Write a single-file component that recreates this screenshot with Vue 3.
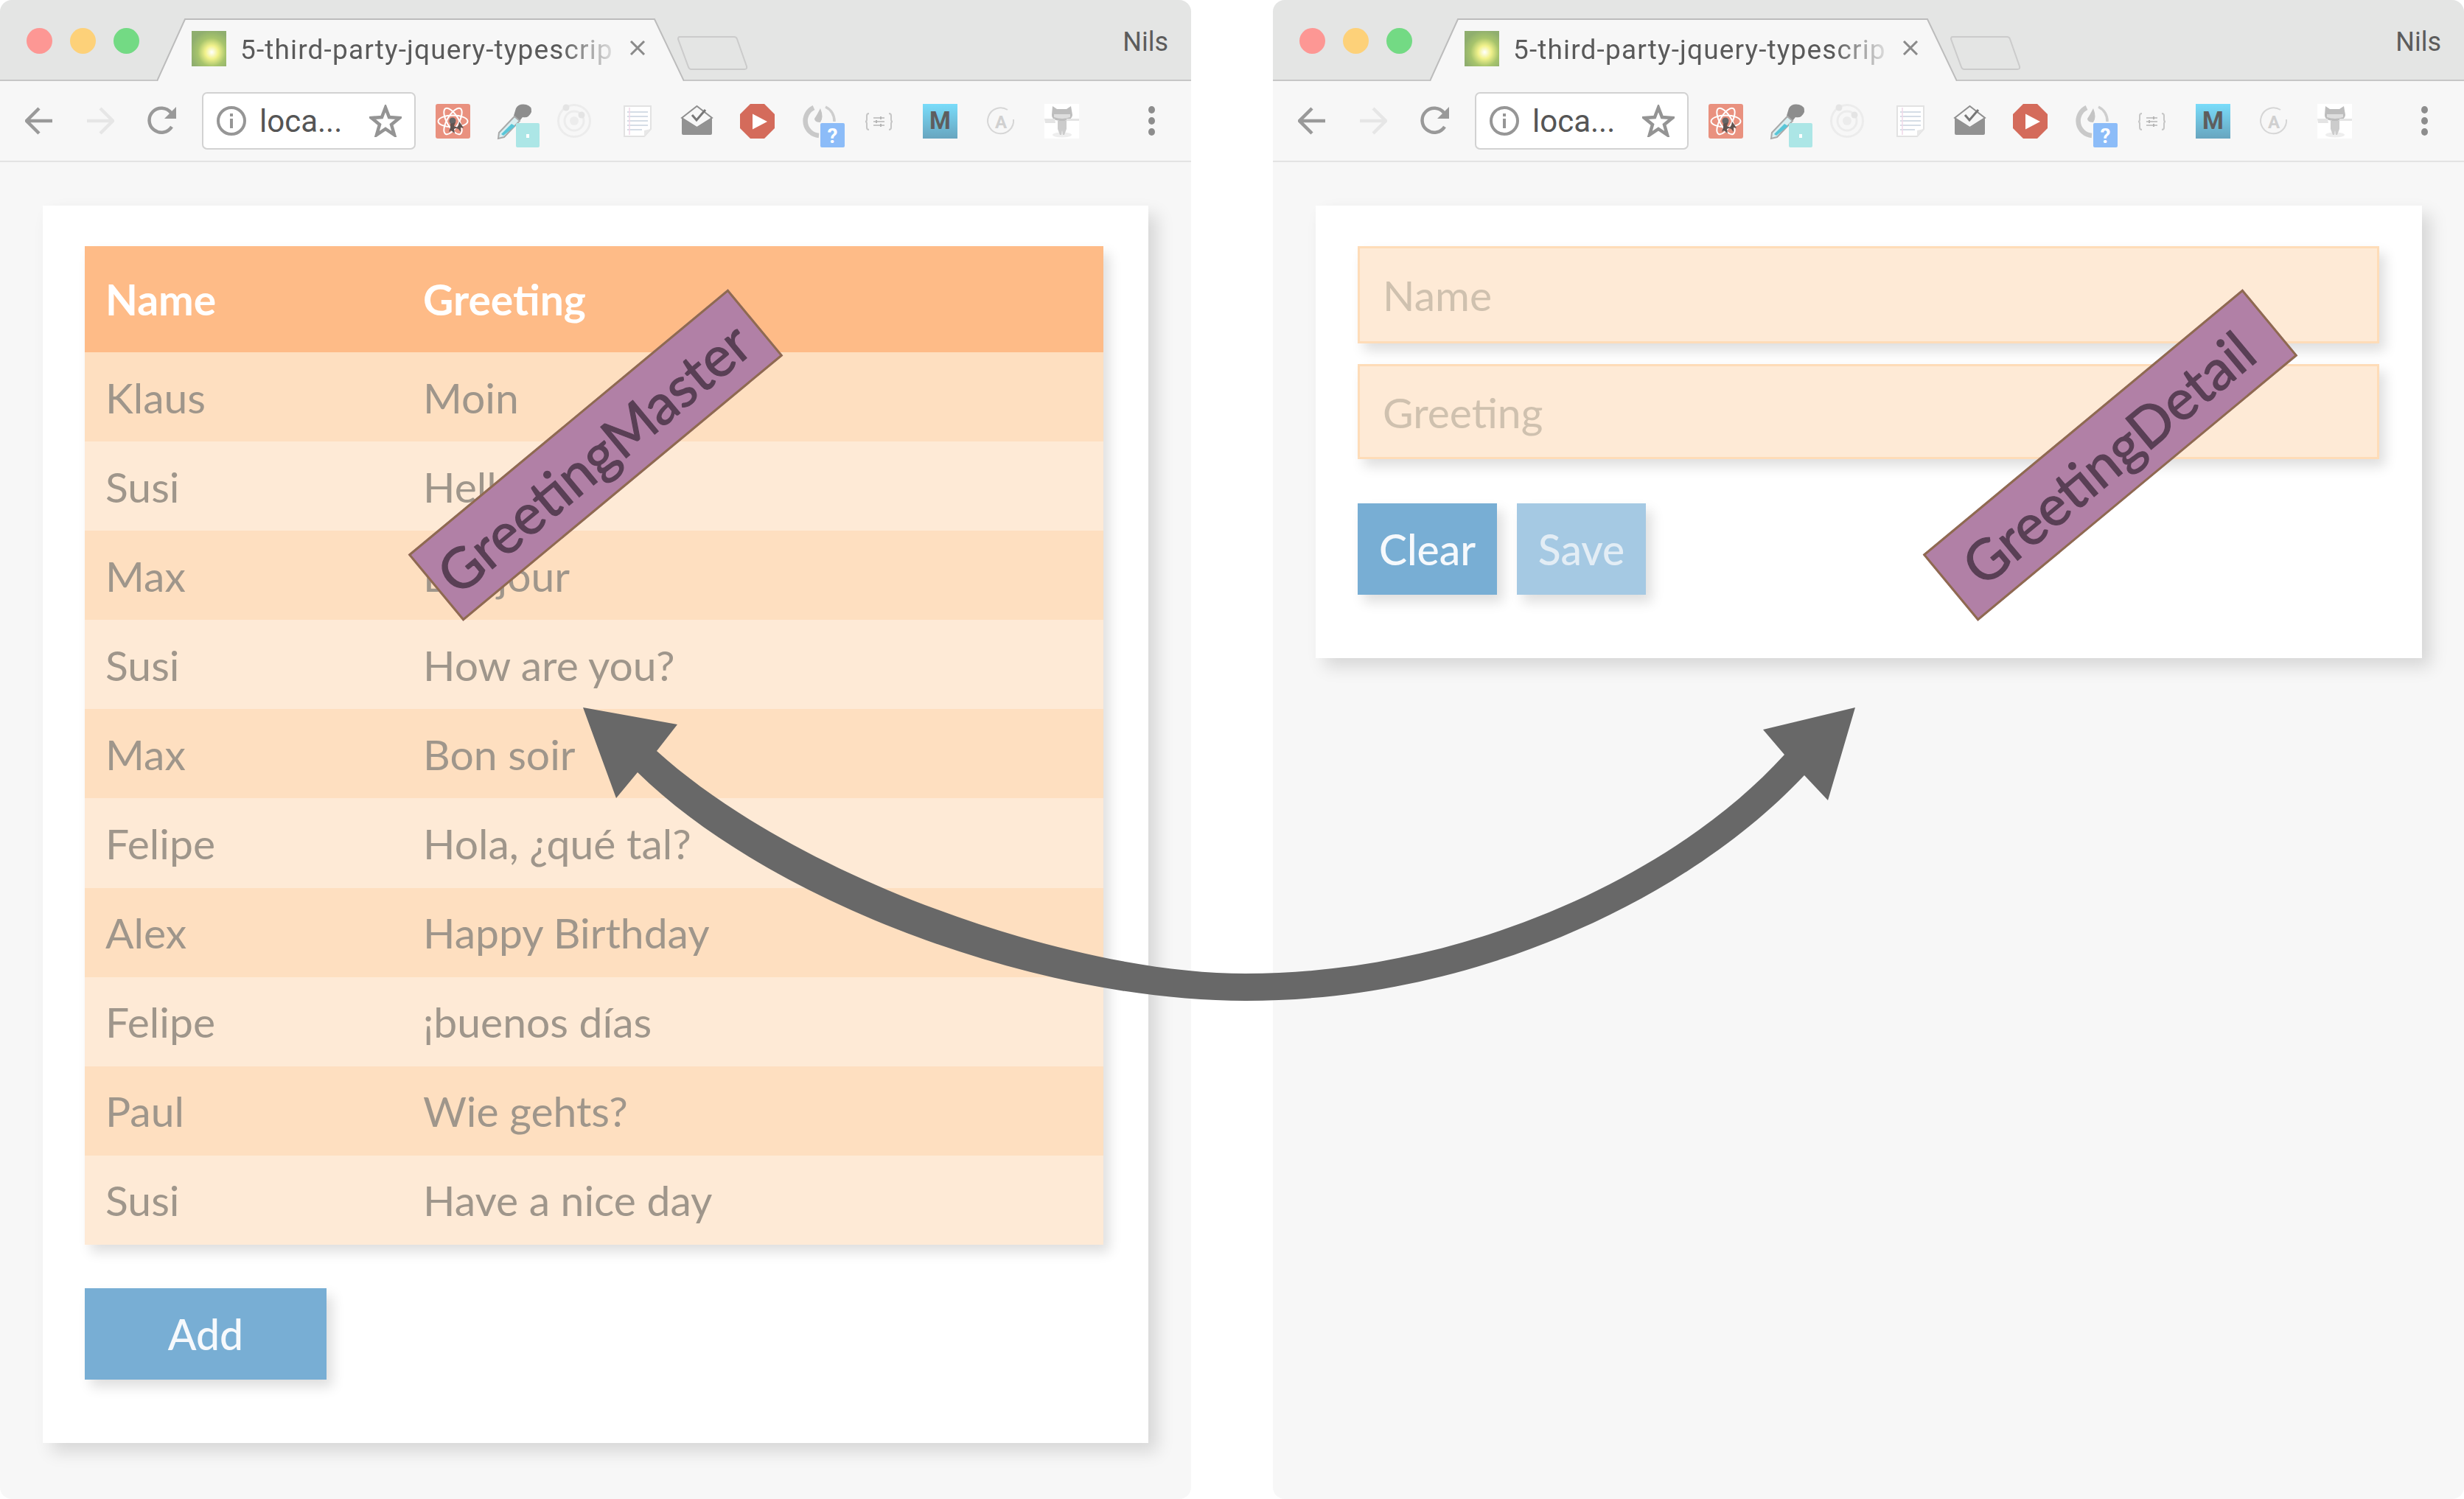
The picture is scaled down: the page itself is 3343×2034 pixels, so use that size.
<script setup>
const windows = ['master', 'detail'];

const greetings = [
  { name: 'Klaus', text: 'Moin' },
  { name: 'Susi', text: 'Hello!' },
  { name: 'Max', text: 'Bonjour' },
  { name: 'Susi', text: 'How are you?' },
  { name: 'Max', text: 'Bon soir' },
  { name: 'Felipe', text: 'Hola, ¿qué tal?' },
  { name: 'Alex', text: 'Happy Birthday' },
  { name: 'Felipe', text: '¡buenos días' },
  { name: 'Paul', text: 'Wie gehts?' },
  { name: 'Susi', text: 'Have a nice day' }
];
</script>

<template>
  <div class="stage">
    <section v-for="win in windows" :key="win" class="window">
      <header class="tab-strip">
        <div class="lights">
          <span class="light red"></span>
          <span class="light yellow"></span>
          <span class="light green"></span>
        </div>
        <div class="tab">
          <svg class="tab-shape" viewBox="0 0 715 85" preserveAspectRatio="none">
            <path d="M0 85 L38 1 H675 L715 85" fill="#f7f7f7" stroke="#bcbcbc" stroke-width="2" />
          </svg>
          <svg class="favicon" viewBox="0 0 47 48">
            <defs>
              <radialGradient :id="`fav-${win}`" cx="0.58" cy="0.6" r="0.62">
                <stop offset="0" stop-color="#ffffff" />
                <stop offset="0.3" stop-color="#f2f28c" />
                <stop offset="0.65" stop-color="#a7c46c" />
                <stop offset="1" stop-color="#8fae6e" />
              </radialGradient>
            </defs>
            <rect width="47" height="48" :fill="`url(#fav-${win})`" />
          </svg>
          <span class="tab-title">5-third-party-jquery-typescrip</span>
          <svg class="tab-close" viewBox="0 0 22 20">
            <path d="M2 1 L20 19 M20 1 L2 19" stroke="#8a8a8a" stroke-width="3" fill="none" />
          </svg>
        </div>
        <svg class="new-tab" viewBox="0 0 96 47">
          <path d="M3 1 H77 Q80 1 81 4 L94 41 Q95 45 91 45 H19 Q16 45 15 42 L1 4 Q1 1 3 1 Z" fill="#e4e5e4" stroke="#cbcbcb" stroke-width="2" />
        </svg>
        <span class="user">Nils</span>
      </header>

      <nav class="toolbar">
        <svg class="nav-icon" viewBox="0 0 38 38">
          <path d="M37 19 H4 M19 2 L2 19 L19 36" fill="none" stroke="#999" stroke-width="4.5" />
        </svg>
        <svg class="nav-icon" viewBox="0 0 38 38">
          <path d="M1 19 H34 M19 2 L36 19 L19 36" fill="none" stroke="#e6e6e6" stroke-width="4.5" />
        </svg>
        <svg class="nav-icon reload" viewBox="0 0 40 40">
          <path d="M33 28 A16.5 16.5 0 1 1 32 9" fill="none" stroke="#999" stroke-width="4.5" />
          <path d="M39 1 V17 H23 Z" fill="#999" />
        </svg>

        <div class="address">
          <svg class="info" viewBox="0 0 40 40">
            <circle cx="20" cy="20" r="18" fill="none" stroke="#969696" stroke-width="4" />
            <path d="M20 17 V30 M20 10 V14" stroke="#969696" stroke-width="4" />
          </svg>
          <span class="url">loca...</span>
          <svg class="star" viewBox="0 0 44 44">
            <path d="M22 4 L27 17 L41 18 L30 27 L34 41 L22 33 L10 41 L14 27 L3 18 L17 17 Z" fill="none" stroke="#949494" stroke-width="4.5" />
          </svg>
        </div>

        <div class="extensions">
          <svg class="ext" viewBox="0 0 47 47">
            <rect width="47" height="47" rx="3" fill="#e9917f" />
            <g fill="none" stroke="#fff" stroke-width="2">
              <ellipse cx="23.5" cy="23.5" rx="20" ry="8" />
              <ellipse cx="23.5" cy="23.5" rx="20" ry="8" transform="rotate(60 23.5 23.5)" />
              <ellipse cx="23.5" cy="23.5" rx="20" ry="8" transform="rotate(120 23.5 23.5)" />
            </g>
            <circle cx="23" cy="23" r="4.5" fill="#666" />
            <path d="M20 27 L27 25 L25 30 L30 32 L25 34 L26 40 L21 36 L18 38 L20 32 Z M32 24 L35 28 L38 33 L34 32 L34 38 L31 34 L28 33 L31 29 Z" fill="#5f5350" />
          </svg>

          <svg class="ext" viewBox="0 0 47 47">
            <path d="M26 6 Q30 -1 40 1 Q48 3 47 11 Q43 20 35 18 L31 23 L23 16 Z" fill="#8d8d8d" />
            <path d="M24 17 L31 23 L10 45 L2 47 L3 39 Z" fill="#d9eef0" stroke="#a9a9a9" stroke-width="2" />
            <path d="M20 27 L25 30 L9 43 L6 41 Z" fill="#58c6d8" />
            <rect x="26" y="26" width="32" height="33" rx="2" fill="#ace6e6" />
            <rect x="40" y="41" width="4" height="5" fill="#fff" />
          </svg>

          <svg class="ext" viewBox="0 0 47 47">
            <g fill="none" stroke="#ececec">
              <circle cx="23" cy="23" r="21.5" stroke-width="3" />
              <circle cx="23" cy="23" r="13" stroke-width="3" />
            </g>
            <circle cx="23" cy="23" r="6" fill="#ececec" />
            <circle cx="12" cy="5" r="4.5" fill="#e4e4e4" />
            <circle cx="33" cy="15" r="4.5" fill="#e4e4e4" />
          </svg>

          <svg class="ext" viewBox="0 0 47 47">
            <path d="M8 3 H44 V34 L35 44 H8 Z" fill="#fff" stroke="#e2e2e2" stroke-width="2" />
            <path d="M12 11 H40 M12 17 H40 M12 23 H40 M12 29 H40 M12 35 H32" stroke="#d5dde6" stroke-width="2" />
            <path d="M15 5 V42" stroke="#f0d8e8" stroke-width="1.5" />
            <path d="M44 34 L35 36 L35 44 Z" fill="#e8e8e8" />
          </svg>

          <svg class="ext" viewBox="0 0 47 47">
            <path d="M4 19 L24.5 3 L45 19 L24.5 32 Z" fill="#f7f7f7" stroke="#8f8f8f" stroke-width="2" />
            <path d="M4 19 L24.5 33 L45 19 V40 Q45 42 43 42 H6 Q4 42 4 40 Z" fill="#929292" />
            <path d="M18 15 L24 22 L36 8" fill="none" stroke="#777" stroke-width="3" />
          </svg>

          <svg class="ext" viewBox="0 0 47 47">
            <path d="M14 0 H33 L47 14 V33 L33 47 H14 L0 33 V14 Z" fill="#d46b5b" />
            <path d="M17 13.5 L37 24 L17 34.5 Z" fill="#fff" />
          </svg>

          <svg class="ext" viewBox="0 0 47 47">
            <path d="M17 5 A20 20 0 0 0 24 43" fill="none" stroke="#c9c9c9" stroke-width="6.5" />
            <path d="M33 4 A21 21 0 0 1 45 24" fill="none" stroke="#cecece" stroke-width="3.5" />
            <path d="M26 6 Q31 18 26 25 Q18 25 18 20 Q22 14 26 6 Z" fill="#c4c4c4" />
            <rect x="26" y="26" width="33" height="33" rx="2" fill="#8cbcf8" />
            <text x="42.5" y="53" class="badge-mark">?</text>
          </svg>

          <svg class="ext" viewBox="0 0 47 47">
            <g fill="none" stroke="#c6c6c6" stroke-width="2">
              <path d="M10 13 Q7 13 7 16 V21 Q7 24 5 24 Q7 24 7 27 V32 Q7 35 10 35" />
              <path d="M37 13 Q40 13 40 16 V21 Q40 24 42 24 Q40 24 40 27 V32 Q40 35 37 35" />
              <path d="M16 19 H31 M16 24 H31 M16 29 H31" stroke-width="2" />
            </g>
            <path d="M26 17 V21 M20 22 V26 M26 27 V31" stroke="#b5b5b5" stroke-width="2" />
          </svg>

          <svg class="ext" viewBox="0 0 47 47">
            <defs>
              <linearGradient :id="`m-${win}`" x1="0" y1="0" x2="0" y2="1">
                <stop offset="0" stop-color="#79dcfa" />
                <stop offset="1" stop-color="#68a5bf" />
              </linearGradient>
            </defs>
            <rect width="47" height="47" :fill="`url(#m-${win})`" />
            <text x="23.5" y="34" class="ext-m">M</text>
          </svg>

          <svg class="ext" viewBox="0 0 47 47">
            <path d="M33 8 A17.5 17.5 0 1 0 41 21" fill="none" stroke="#d6d6d6" stroke-width="2" />
            <text x="24" y="33" class="ext-a">A</text>
          </svg>

          <svg class="ext" viewBox="0 0 47 47">
            <rect width="47" height="47" fill="#fff" />
            <ellipse cx="24" cy="42" rx="13" ry="3.5" fill="#eeeeee" />
            <path d="M11 3 L17 7 H30 L36 3 L38 15 Q37 23 24 23 Q10 23 10 15 Z" fill="#bdbdbd" />
            <path d="M13 14 H35 V18 Q24 22 13 18 Z" fill="#dedede" />
            <path d="M18 23 H30 L30 34 L27 42 H25 L24 36 L23 42 H21 L18 34 Z" fill="#cccccc" />
            <path d="M0 20 H14 L15 26 H1 Z M30 20 H47 V23 H30 Z" fill="#e4e4e4" />
          </svg>
        </div>

        <div class="menu-dots">
          <span></span>
          <span></span>
          <span></span>
        </div>
      </nav>

      <main class="page">
        <div v-if="win === 'master'" class="card">
          <div class="table">
            <div class="row head">
              <div>Name</div>
              <div>Greeting</div>
            </div>
            <div v-for="(item, index) in greetings" :key="index" class="row" :class="index % 2 ? 'even' : 'odd'">
              <div>{{ item.name }}</div>
              <div>{{ item.text }}</div>
            </div>
          </div>
          <button class="btn add" type="button">Add</button>
        </div>

        <div v-else class="card detail">
          <input class="field name" type="text" placeholder="Name" />
          <input class="field greeting" type="text" placeholder="Greeting" />
          <div class="actions">
            <button class="btn clear" type="button">Clear</button>
            <button class="btn save" type="button">Save</button>
          </div>
        </div>
      </main>
    </section>

    <div class="label label-master">GreetingMaster</div>
    <div class="label label-detail">GreetingDetail</div>

    <svg class="arrow" viewBox="0 0 3343 2034">
      <path
        fill="#686868"
        d="M791 960 L919 983 L891 1019 C1080 1190 1450 1321 1690 1321 C1985 1321 2270 1190 2421 1024 L2392 990 L2517 960 L2480 1086 L2448 1052 C2290 1220 2000 1358 1690 1358 C1400 1358 1040 1220 865 1048 L836 1083 Z"
      />
    </svg>
  </div>
</template>

<style>
html,
body {
  margin: 0;
  background: #ffffff;
}
</style>

<style scoped>
.stage {
  position: relative;
  display: flex;
  justify-content: space-between;
  width: 3343px;
  height: 2034px;
  overflow: hidden;
  background: #ffffff;
  font-family: Lato, "Open Sans", sans-serif;
}

.window {
  display: flex;
  flex-direction: column;
  width: 1616px;
  height: 2034px;
  border-radius: 16px;
  overflow: hidden;
  background: #f7f7f7;
}

.tab-strip {
  display: flex;
  align-items: flex-end;
  flex: none;
  height: 110px;
  box-sizing: border-box;
  border-bottom: 2px solid #c6c6c6;
  background: #e4e5e4;
  font-family: Roboto, sans-serif;
}

.lights {
  display: flex;
  gap: 24px;
  align-self: flex-start;
  margin: 38px 0 0 36px;
}

.light {
  width: 35px;
  height: 35px;
  border-radius: 50%;
}

.red { background: #fd9794; }
.yellow { background: #fdd179; }
.green { background: #73da84; }

.tab {
  position: relative;
  display: flex;
  align-items: center;
  width: 715px;
  height: 85px;
  margin: 0 0 -2px 24px;
  box-sizing: border-box;
  padding: 0 0 14px 47px;
}

.tab-shape {
  position: absolute;
  inset: 0;
  width: 100%;
  height: 100%;
}

.favicon {
  position: relative;
  flex: none;
  width: 47px;
  height: 48px;
  margin-top: 10px;
}

.tab-title {
  position: relative;
  flex: none;
  width: 506px;
  margin: 14px 0 0 19px;
  font-size: 37px;
  letter-spacing: 1.15px;
  white-space: nowrap;
  overflow: hidden;
  color: #5a5a5a;
  -webkit-mask-image: linear-gradient(to right, #000 86%, rgba(0, 0, 0, 0.15) 100%);
  mask-image: linear-gradient(to right, #000 86%, rgba(0, 0, 0, 0.15) 100%);
}

.tab-close {
  position: relative;
  flex: none;
  width: 22px;
  height: 20px;
  margin: 8px 0 0 22px;
}

.new-tab {
  flex: none;
  align-self: flex-start;
  width: 96px;
  height: 47px;
  margin: 49px 0 0 -9px;
}

.user {
  align-self: flex-start;
  margin: 36px 31px 0 auto;
  font-size: 36px;
  color: #5c5c5c;
}

.toolbar {
  display: flex;
  align-items: center;
  flex: none;
  height: 110px;
  box-sizing: border-box;
  padding-left: 34px;
  border-bottom: 2px solid #e3e3e3;
  background: #f7f7f7;
  font-family: Roboto, sans-serif;
}

.nav-icon {
  width: 38px;
  height: 38px;
  margin-right: 45px;
}

.reload {
  width: 40px;
  height: 40px;
  margin-right: 34px;
}

.address {
  display: flex;
  align-items: center;
  width: 290px;
  height: 78px;
  box-sizing: border-box;
  padding: 0 17px 0 18px;
  border: 2px solid #d2d2d2;
  border-radius: 7px;
  background: #ffffff;
}

.info {
  width: 40px;
  height: 40px;
  margin-right: 18px;
}

.url {
  font-size: 42px;
  color: #555555;
}

.star {
  width: 44px;
  height: 44px;
  margin-left: auto;
}

.extensions {
  display: flex;
  gap: 35.6px;
  margin-left: 27px;
}

.ext {
  width: 47px;
  height: 47px;
  overflow: visible;
}

.badge-mark {
  font: 700 28px Roboto, sans-serif;
  fill: #ffffff;
  text-anchor: middle;
}

.ext-m {
  font: 700 33px Roboto, sans-serif;
  fill: #5e5e5e;
  text-anchor: middle;
}

.ext-a {
  font: 700 24px Roboto, sans-serif;
  fill: #d0d0d0;
  text-anchor: middle;
}

.menu-dots {
  display: flex;
  flex-direction: column;
  gap: 5px;
  margin-left: 94px;
}

.menu-dots span {
  width: 9px;
  height: 10px;
  border-radius: 50%;
  background: #8d8d8d;
}

.page {
  flex: 1;
  padding: 59px 0 0 58px;
}

.card {
  display: flex;
  flex-direction: column;
  align-items: flex-start;
  width: 1500px;
  box-sizing: border-box;
  padding: 55px 60px 86px 57px;
  background: #ffffff;
  box-shadow: 12px 12px 22px rgba(0, 0, 0, 0.13);
}

.card.detail {
  width: 1501px;
  padding-right: 58px;
}

.table {
  width: 1382px;
  box-shadow: 8px 10px 16px rgba(0, 0, 0, 0.13);
  font-size: 57px;
  color: #9f968b;
}

.row {
  display: grid;
  grid-template-columns: 431px 1fr;
  align-items: center;
  height: 121.1px;
  padding-left: 28px;
  white-space: nowrap;
}

.row.head {
  height: 144px;
  background: #febb87;
  color: #ffffff;
  font-weight: 700;
}

.odd { background: #fedfc0; }
.even { background: #feead6; }

.btn {
  height: 124px;
  margin: 0;
  border: 0;
  background: #78aed4;
  color: #f6f9fc;
  font-family: Lato, sans-serif;
  font-size: 57px;
  font-weight: 500;
  box-shadow: 8px 10px 16px rgba(0, 0, 0, 0.13);
}

.add {
  width: 328px;
  margin-top: 59px;
}

.field {
  width: 100%;
  height: 132px;
  box-sizing: border-box;
  padding: 0 31px;
  border: 3px solid #fedcb8;
  border-radius: 0;
  outline: none;
  background: #feead6;
  font-family: Lato, sans-serif;
  font-size: 57px;
  box-shadow: 8px 10px 16px rgba(0, 0, 0, 0.13);
}

.field::placeholder {
  color: #cfc1af;
  opacity: 1;
}

.field.greeting {
  height: 129px;
  margin-top: 28px;
}

.actions {
  display: flex;
  gap: 27px;
  margin-top: 60px;
}

.clear { width: 189px; }

.save {
  width: 175px;
  background: #a5c9e3;
  color: #e3edf5;
}

.label {
  position: absolute;
  top: 559.4px;
  width: 564px;
  height: 117px;
  box-sizing: border-box;
  padding-right: 9px;
  border: 3px solid #8f6a50;
  background: #b180a6;
  color: #593f55;
  font-size: 76px;
  line-height: 111px;
  -webkit-text-stroke: 1.2px #593f55;
  text-align: center;
  white-space: nowrap;
  transform: rotate(-39.7deg);
}

.label-master { left: 525.5px; }
.label-detail { left: 2580.5px; }

.arrow {
  position: absolute;
  inset: 0;
  width: 3343px;
  height: 2034px;
  pointer-events: none;
}
</style>
